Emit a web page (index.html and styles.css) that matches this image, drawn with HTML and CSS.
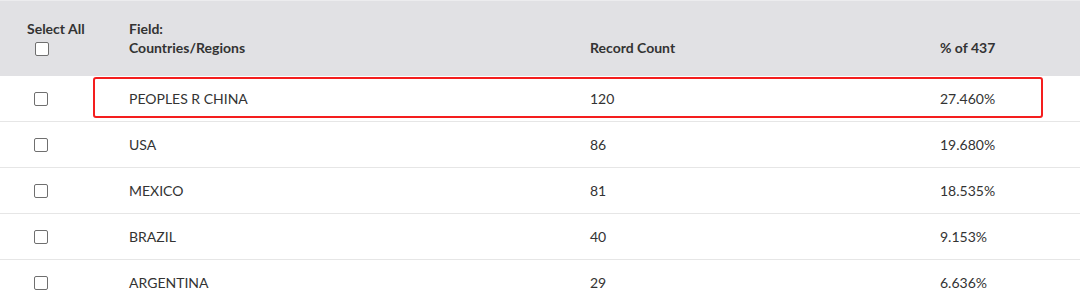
FILE: index.html
```html
<!DOCTYPE html>
<html>
<head>
<meta charset="utf-8">
<link rel="stylesheet" href="styles.css">
</head>
<body>
<div class="table">
  <div class="row head">
    <div class="cell sel">
      <span class="sel-label">Select All</span>
      <span class="box"></span>
    </div>
    <div class="cell">Field:<br>Countries/Regions</div>
    <div class="cell">Record Count</div>
    <div class="cell">% of 437</div>
  </div>
  <div class="row body highlight">
    <div class="cell chk"><span class="box"></span></div>
    <div class="cell">PEOPLES R CHINA</div>
    <div class="cell">120</div>
    <div class="cell">27.460%</div>
  </div>
  <div class="row body">
    <div class="cell chk"><span class="box"></span></div>
    <div class="cell">USA</div>
    <div class="cell">86</div>
    <div class="cell">19.680%</div>
  </div>
  <div class="row body">
    <div class="cell chk"><span class="box"></span></div>
    <div class="cell">MEXICO</div>
    <div class="cell">81</div>
    <div class="cell">18.535%</div>
  </div>
  <div class="row body">
    <div class="cell chk"><span class="box"></span></div>
    <div class="cell">BRAZIL</div>
    <div class="cell">40</div>
    <div class="cell">9.153%</div>
  </div>
  <div class="row body">
    <div class="cell chk"><span class="box"></span></div>
    <div class="cell">ARGENTINA</div>
    <div class="cell">29</div>
    <div class="cell">6.636%</div>
  </div>
</div>
</body>
</html>
```

FILE: styles.css
```css
html, body {
  margin: 0;
  padding: 0;
  background: #ffffff;
}
body {
  font-family: Lato, "Open Sans", "Noto Sans", sans-serif;
  font-size: 14px;
  color: #333333;
}
.table {
  width: 1080px;
}
.row {
  display: grid;
  grid-template-columns: 129px 461px 350px 1fr;
}
.head {
  height: 76px;
  background: #e1e1e4;
  border-top: 1px solid #ececee;
  box-sizing: border-box;
  font-weight: 700;
  line-height: 19px;
  align-items: end;
  padding-bottom: 19px;
}
.sel {
  display: flex;
  flex-direction: column;
  align-items: flex-start;
  padding-left: 27px;
  align-self: start;
  padding-top: 18px;
}
.sel-label {
  display: block;
}
.sel .box {
  margin: 4px 0 0 8px;
}
.body {
  height: 46px;
  box-sizing: border-box;
  border-bottom: 1px solid #e6e6e6;
  align-items: center;
  position: relative;
}
.chk {
  padding-left: 34px;
  display: flex;
  align-items: center;
}
.box {
  display: block;
  width: 14px;
  height: 14px;
  box-sizing: border-box;
  border: 1.5px solid #6f6f6f;
  border-radius: 2px;
  background: #fff;
}
.highlight::after {
  content: "";
  position: absolute;
  left: 93px;
  top: 1px;
  width: 950px;
  height: 41px;
  box-sizing: border-box;
  border: 2px solid #f41e1e;
  border-radius: 3px;
  pointer-events: none;
}
```
